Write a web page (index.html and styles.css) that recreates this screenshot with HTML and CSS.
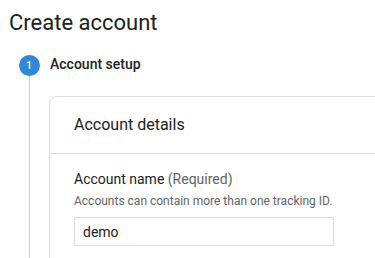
FILE: index.html
```html
<!DOCTYPE html>
<html lang="en">
<head>
  <meta charset="UTF-8">
  <meta name="viewport" content="width=device-width, initial-scale=1.0">
  <title>Create account</title>
  <link rel="stylesheet" href="styles.css">
</head>
<body>

  <h1 class="page-title">Create account</h1>

  <div class="step">
    <div class="rail">
      <div class="step-num">1</div>
      <div class="rail-line"></div>
    </div>

    <div class="step-content">
      <div class="step-title">Account setup</div>

      <div class="card">
        <div class="card-header">Account details</div>
        <div class="card-body">
          <label class="field-label" for="account-name">Account name <span class="hint">(Required)</span></label>
          <div class="field-help">Accounts can contain more than one tracking ID.</div>
          <input id="account-name" class="field-input" type="text" value="demo">
        </div>
      </div>
    </div>
  </div>

</body>
</html>
```

FILE: styles.css
```css
html, body {
  overflow: hidden;
}

body {
  margin: 0;
  font-family: Roboto, "Liberation Sans", Arial, sans-serif;
  color: #202124;
  background-color: #fff;
}

.page-title {
  margin: 0;
  padding: 9px 0 0 9px;
  font-size: 22px;
  font-weight: 400;
  line-height: 28px;
}

.step {
  display: flex;
  margin-top: 18px;
  padding-left: 18px;
}

.rail {
  display: flex;
  flex-direction: column;
  align-items: center;
  width: 22px;
  flex-shrink: 0;
}

.step-num {
  width: 21px;
  height: 21px;
  border-radius: 50%;
  background-color: #3186d8;
  color: #fff;
  font-size: 10px;
  font-weight: 500;
  line-height: 21px;
  text-align: center;
}

.rail-line {
  flex: 1;
  width: 1px;
  min-height: 200px;
  background-color: #d0d0d0;
}

.step-content {
  flex: 1;
  margin-left: 9px;
}

.step-title {
  padding-left: 1px;
  font-size: 14px;
  font-weight: 500;
  line-height: 18px;
  margin-bottom: 23px;
}

.card {
  margin-right: -30px;
  border: 1px solid #dadce0;
  border-radius: 8px 8px 0 0;
}

.card-header {
  height: 56px;
  padding: 0 24px;
  font-size: 16px;
  line-height: 56px;
  border-bottom: 1px solid #dadce0;
}

.card-body {
  padding: 15px 24px 40px;
}

.field-label {
  display: block;
  font-size: 14px;
  line-height: 20px;
}

.hint {
  color: #5f6368;
}

.field-help {
  margin-top: 4px;
  font-size: 12px;
  line-height: 16px;
  color: #5f6368;
}

.field-input {
  display: block;
  box-sizing: border-box;
  width: 260px;
  height: 29px;
  margin-top: 8px;
  padding: 0 8px;
  border: 1px solid #dadce0;
  border-radius: 0;
  font-family: inherit;
  font-size: 14px;
  color: #202124;
}

.field-input:focus {
  outline: none;
}
```
